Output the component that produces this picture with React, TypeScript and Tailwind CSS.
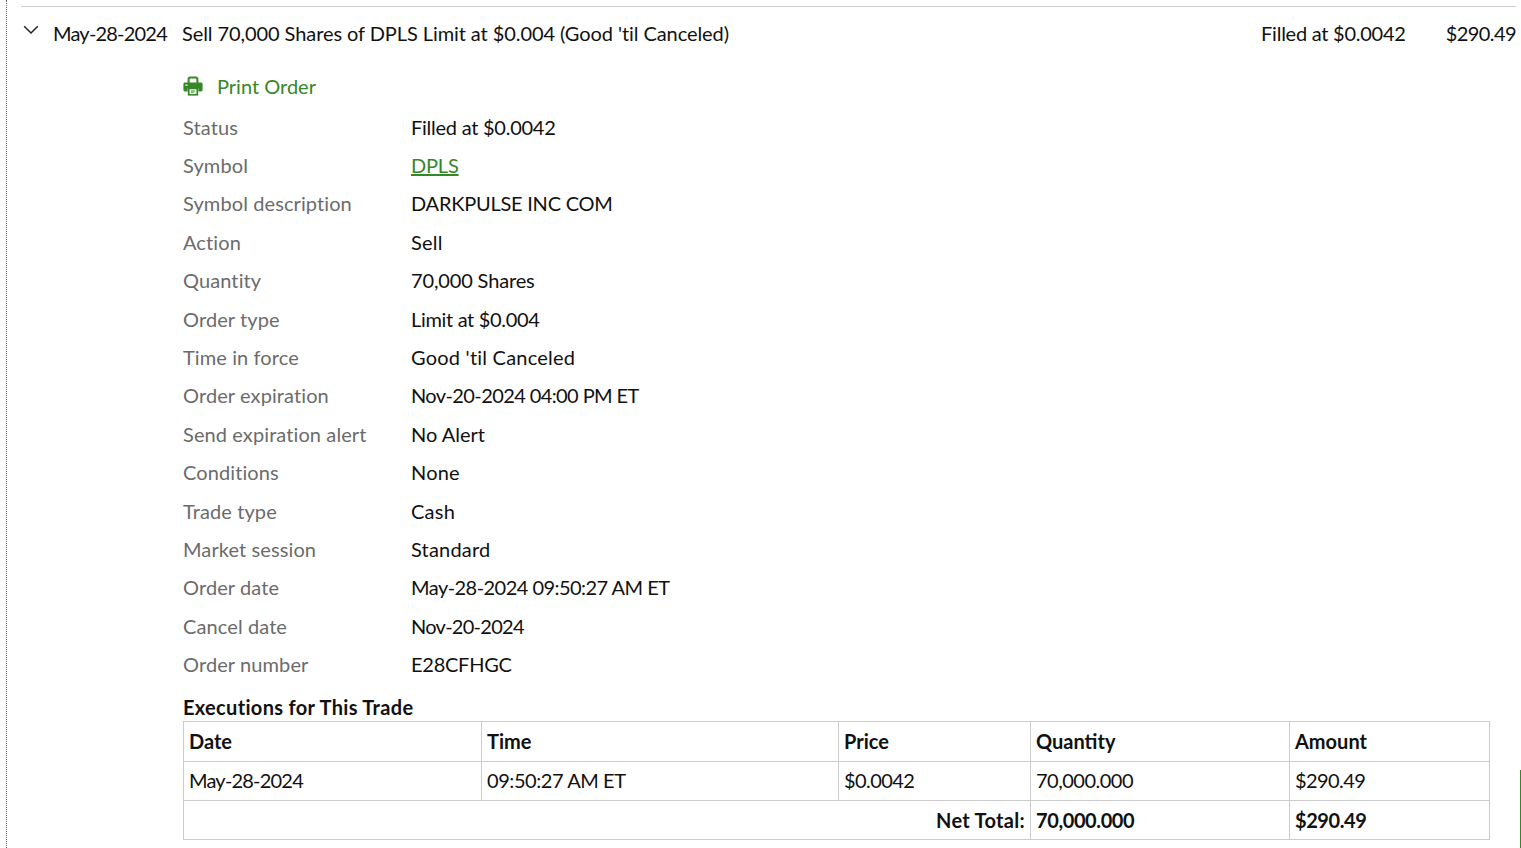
import React from "react";

const rows: [string, string, string][] = [
  ["Status", "Filled at $0.0042", "tracking-[-0.25px]"],
  ["Symbol", "DPLS", "tracking-[-0.2px]"],
  ["Symbol description", "DARKPULSE INC COM", "tracking-[-0.24px]"],
  ["Action", "Sell", "tracking-[0.25px]"],
  ["Quantity", "70,000 Shares", "tracking-[-0.15px]"],
  ["Order type", "Limit at $0.004", "tracking-[-0.33px]"],
  ["Time in force", "Good 'til Canceled", "tracking-[0.22px]"],
  ["Order expiration", "Nov-20-2024 04:00 PM ET", "tracking-[-0.6px]"],
  ["Send expiration alert", "No Alert", ""],
  ["Conditions", "None", "tracking-[0.2px]"],
  ["Trade type", "Cash", "tracking-[0.25px]"],
  ["Market session", "Standard", "tracking-[0.2px]"],
  ["Order date", "May-28-2024 09:50:27 AM ET", "tracking-[-0.54px]"],
  ["Cancel date", "Nov-20-2024", "tracking-[-0.73px]"],
  ["Order number", "E28CFHGC", "tracking-[-0.25px]"],
];

function Printer() {
  return (
    <svg width="20" height="20" viewBox="0 0 20 20" className="shrink-0">
      <path fill="#368727" d="M4.6 8V3C4.6 1.5 5.7.6 7 .6h6c1.300 0 2.400.9 2.400 2.400v5h-2V3.400c0-.5-.3-.8-.8-.8H7.400c-.5 0-.8.3-.8.8V8z" />
      <path fill="#368727" d="M2 6.600h16c.9 0 1.600.7 1.600 1.600v5.600c0 .9-.7 1.600-1.600 1.600h-2.600v-3H4.600v3H2c-.9 0-1.600-.7-1.600-1.600V8.200c0-.9.7-1.600 1.600-1.600z" />
      <path fill="#368727" d="M4.800 11.800h10.400V19.600H4.800z" />
      <path fill="#fff" d="M6.600 13.200h6.800v4.800H6.600zM2.400 8.400h2.200v1.400H2.400z" />
      <path fill="#368727" d="M8 14.400h4v1H8zM8 16.200h2.600v.9H8z" />
    </svg>
  );
}

const cell = "border border-[#cccccc] px-[5px]";
const dataCell = "border border-[#cccccc] px-[5px] pb-[2px]";

export default function App() {
  return (
    <div className="relative h-[848px] w-[1521px] overflow-hidden bg-white font-['Lato','Noto_Sans',sans-serif] text-[20px] leading-[24px] text-[#111111]">
      <div className="absolute bottom-0 right-0 h-[78px] w-px bg-[#368727]" />
      <div className="ml-[6px] h-full border-l border-dotted border-[#666666] pl-[14px] pr-[5px] pt-[6px]">
        <div className="border-t border-[#cccccc]">
          <div className="flex h-[55px] items-start pt-[14px]">
            <svg width="16" height="10" viewBox="0 0 16 10" className="ml-[2px] mt-[4px] shrink-0">
              <path d="M1.200 1.200 8 8l6.800-6.800" fill="none" stroke="#1a2a1a" strokeWidth="1.500" />
            </svg>
            <span className="ml-[14px] w-[129px] shrink-0 whitespace-nowrap tracking-[-0.8px]">May-28-2024</span>
            <span className="flex-1 whitespace-nowrap tracking-[-0.08px]">Sell 70,000 Shares of DPLS Limit at $0.004 (Good 'til Canceled)</span>
            <span className="whitespace-nowrap tracking-[-0.25px]">Filled at $0.0042</span>
            <span className="ml-[40px] whitespace-nowrap tracking-[-0.57px]">$290.49</span>
          </div>
        </div>
        <div className="ml-[162px] w-[1307px]">
          <div className="flex h-[45.5px] items-center gap-[14px] pt-[2.5px] text-[#368727]">
            <Printer />
            <span>Print Order</span>
          </div>
          <div className="flex flex-col">
            {rows.map(([k, v, t]) => (
              <div key={k} className="flex h-[38.4px] items-center">
                <span className="w-[228px] shrink-0 tracking-[0.1px] text-[#6b6b6b]">{k}</span>
                {k === "Symbol" ? (
                  <span className={"text-[#368727] underline " + t}>{v}</span>
                ) : (
                  <span className={t}>{v}</span>
                )}
              </div>
            ))}
          </div>
          <div className="mt-[11.500px] h-[26px] font-bold tracking-[0.32px]">Executions for This Trade</div>
          <table className="w-[1306px] table-fixed border-collapse">
            <colgroup>
              <col className="w-[298px]" />
              <col className="w-[357px]" />
              <col className="w-[192px]" />
              <col className="w-[259px]" />
              <col className="w-[200px]" />
            </colgroup>
            <tbody>
              <tr className="h-[40px] font-bold">
                {["Date", "Time", "Price", "Quantity", "Amount"].map((h) => (
                  <td key={h} className={cell}>{h}</td>
                ))}
              </tr>
              <tr className="h-[39px]">
                <td className={dataCell + " tracking-[-0.8px]"}>May-28-2024</td>
                <td className={dataCell + " tracking-[-0.43px]"}>09:50:27 AM ET</td>
                <td className={dataCell + " tracking-[-0.57px]"}>$0.0042</td>
                <td className={dataCell + " tracking-[-0.5px]"}>70,000.000</td>
                <td className={dataCell + " tracking-[-0.57px]"}>$290.49</td>
              </tr>
              <tr className="h-[39px] font-bold">
                <td colSpan={3} className={cell + " text-right tracking-[0.3px]"}>Net Total:</td>
                <td className={cell + " tracking-[-0.4px]"}>70,000.000</td>
                <td className={cell + " tracking-[-0.43px]"}>$290.49</td>
              </tr>
            </tbody>
          </table>
        </div>
      </div>
    </div>
  );
}
